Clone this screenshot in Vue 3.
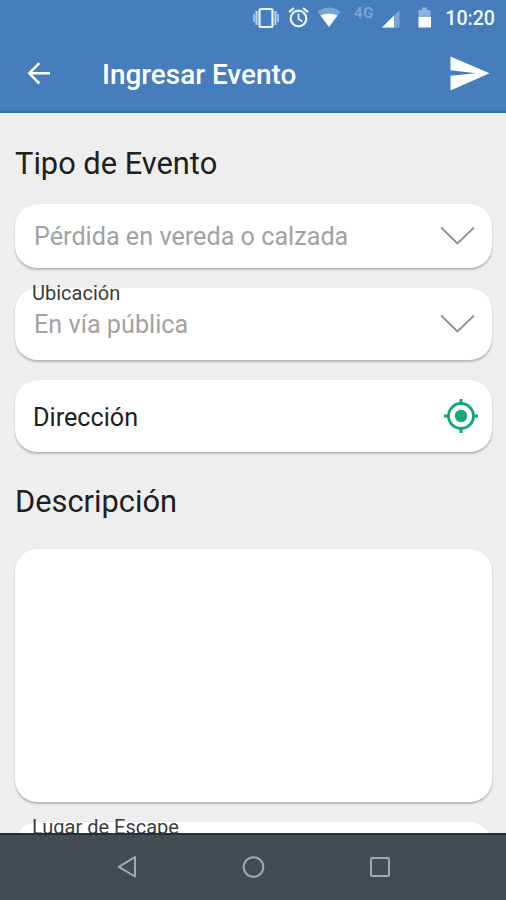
<script setup>
const fields = [
  { id: 'tipo', value: 'Pérdida en vereda o calzada' },
  { id: 'ubicacion', label: 'Ubicación', value: 'En vía pública' },
]
</script>

<template>
  <div class="screen">
    <header class="top">
      <div class="status">
        <svg class="status-icons" width="190" height="36" viewBox="0 0 190 36">
          <g fill="none" stroke="#eaf3fc">
            <rect x="19.5" y="9" width="13" height="18" rx="1.5" stroke-width="2.2" />
            <path d="M16.500 11v14M35.500 11v14" stroke-width="2" opacity=".75" />
            <path d="M14 14v8M38 14v8" stroke-width="1.600" opacity=".65" />
            <circle cx="58.500" cy="18.500" r="7.800" stroke-width="2.200" />
            <path d="M58.500 13.500v5.500l4 2.500" stroke-width="1.800" />
            <path d="M49 12.200l5-4.200M68 12.200l-5-4.200" stroke-width="2.200" />
          </g>
          <path d="M77.500 11.500Q89 3.500 100.500 11.500L89 27Z" fill="#79a4d6" />
          <path d="M80.500 15.500Q89 11.500 97.500 15.500L89 27Z" fill="#fff" />
          <path d="M142 27.500L159.500 10V27.500Z" fill="#79a4d6" />
          <path d="M142 27.500L154 15.500V27.500Z" fill="#fff" />
          <path d="M178.500 10h3.500V7.500h5V10h3.500v7h-12Z" fill="#8db2dd" />
          <path d="M178.500 17H191v10.500h-12.500Z" fill="#fff" />
        </svg>
        <span class="network">4G</span>
        <span class="clock">10:20</span>
      </div>
      <div class="bar">
        <svg class="back" width="24" height="24" viewBox="0 0 24 24">
          <path d="M23 11.300H2.500M12.300 1.100L2.300 11.300L12.300 21.500" fill="none" stroke="#fff" stroke-width="2.500" />
        </svg>
        <h1 class="title">Ingresar Evento</h1>
        <svg class="send" width="40" height="36" viewBox="0 0 40 36">
          <path d="M.5 .5L39.500 17.300L.5 34.500V19.800L26 17.300L.5 14.300Z" fill="#fff" />
        </svg>
      </div>
    </header>

    <main class="content">
      <h2 class="heading">Tipo de Evento</h2>
      <div v-for="field in fields" :key="field.id" class="card select" :class="field.id">
        <span v-if="field.label" class="label">{{ field.label }}</span>
        <span class="value">{{ field.value }}</span>
        <svg class="chevron" width="36" height="20" viewBox="0 0 36 20">
          <path d="M2 1.500L18.500 17.500L35 1.500" fill="none" stroke="#929292" stroke-width="1.900" />
        </svg>
      </div>
      <div class="card address">
        <span class="address-text">Dirección</span>
        <svg class="locate" width="34" height="34" viewBox="0 0 34 34">
          <circle cx="17" cy="17" r="12.500" fill="none" stroke="#16a873" stroke-width="2.900" />
          <circle cx="17" cy="17" r="6.200" fill="#16a873" />
          <path d="M17 0v5M17 29v5M0 17h5M29 17h5" stroke="#16a873" stroke-width="3" />
        </svg>
      </div>
      <h2 class="heading second">Descripción</h2>
      <div class="card description"></div>
      <div class="card escape"><span class="label">Lugar de Escape</span></div>
    </main>

    <nav class="nav">
      <svg width="20" height="24" viewBox="0 0 20 24">
        <path d="M18 2V21.500L1.800 11.800Z" fill="none" stroke="#a3a9ad" stroke-width="2" stroke-linejoin="round" />
      </svg>
      <svg width="24" height="24" viewBox="0 0 24 24">
        <circle cx="11.500" cy="12" r="9.800" fill="none" stroke="#a3a9ad" stroke-width="2" />
      </svg>
      <svg width="20" height="24" viewBox="0 0 20 24">
        <rect x="1" y="3" width="18" height="18" rx="1" fill="none" stroke="#a3a9ad" stroke-width="2" />
      </svg>
    </nav>
  </div>
</template>

<style>
body { margin: 0; overflow: hidden; }
</style>

<style scoped>
.screen {
  box-sizing: border-box;
  width: 506px;
  height: 900px;
  display: flex;
  flex-direction: column;
  overflow: hidden;
  background: #eee;
  color: #202020;
  font-family: Roboto, sans-serif;
}
.top {
  flex: none;
  box-sizing: border-box;
  height: 113px;
  background: #467dbd;
  border-bottom: 2px solid #2c70ad;
}
.status {
  position: relative;
  height: 36px;
  display: flex;
  justify-content: space-between;
  align-items: center;
  padding: 0 11px 0 240px;
}
.status-icons { overflow: visible; }
.network {
  position: absolute;
  left: 354px;
  top: 5px;
  font-size: 15px;
  line-height: 17px;
  letter-spacing: 0.8px;
  font-weight: 500;
  color: #80a9d8;
}
.clock { padding-top: 2px; font-size: 19.6px; line-height: 34px; font-weight: 500; color: #f4f9ff; }
.bar {
  height: 75px;
  display: flex;
  align-items: center;
  padding: 0 16px 0 27px;
}
.back { flex: none; }
.title {
  flex: 1;
  margin: 3px 0 0 51px;
  font-size: 27.9px;
  line-height: 36px;
  font-weight: 500;
  color: #fff;
}
.send { flex: none; }
.content {
  flex: 1;
  min-height: 0;
  overflow: hidden;
  padding: 0 14px 0 15px;
}
.heading {
  margin: 0;
  height: 91px;
  padding-top: 31px;
  box-sizing: border-box;
  font-size: 30.8px;
  line-height: 40px;
  font-weight: 400;
}
.card {
  position: relative;
  box-sizing: border-box;
  display: flex;
  align-items: center;
  justify-content: space-between;
  margin-bottom: 20px;
  border-radius: 22px;
  background: #fff;
  box-shadow: 0 2px 2px rgba(0, 0, 0, 0.23), 0 0 1px rgba(0, 0, 0, 0.1);
}
.select { height: 64px; padding: 0 17px 0 19px; }
.ubicacion { height: 72px; }
.value { padding-top: 2px; font-size: 25.2px; line-height: 34px; color: #a2a2a2; }
.label {
  position: absolute;
  left: 17px;
  top: -7px;
  font-size: 20px;
  line-height: 24px;
  color: #3c3c3c;
}
.address { height: 72px; padding: 0 14px 0 18px; }
.address-text { padding-top: 4px; font-size: 25.2px; line-height: 34px; }
.second { height: 77px; padding-top: 10px; }
.description { height: 253px; }
.escape { height: 72px; }
.nav {
  flex: none;
  box-sizing: border-box;
  height: 67px;
  display: flex;
  justify-content: space-between;
  align-items: center;
  padding: 0 116px 2px 117px;
  background: #444b53;
  border-top: 2px solid #203336;
}
</style>
